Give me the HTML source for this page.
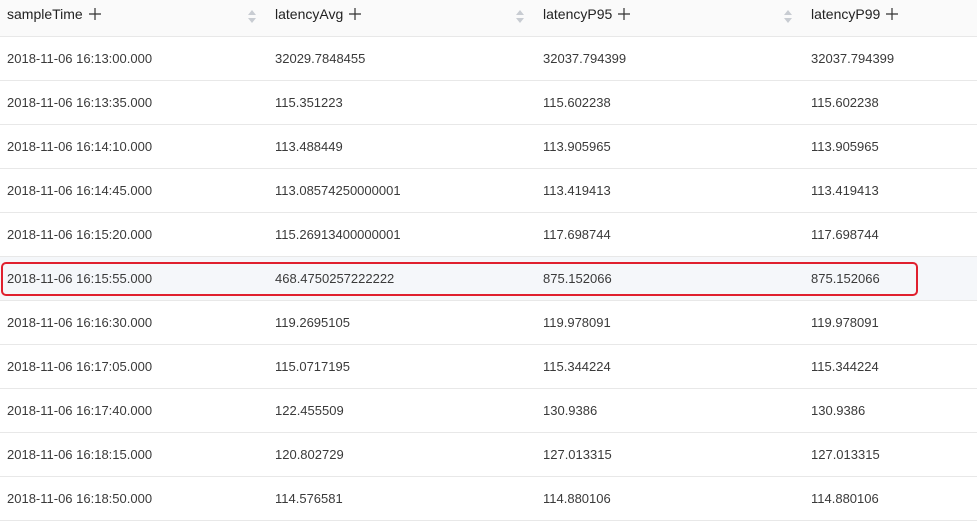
<!DOCTYPE html><html><head><style>
body{margin:0;width:977px;height:523px;overflow:hidden;background:#fff;font-family:"Liberation Sans",Arial,sans-serif;position:relative}
.r{position:absolute;left:0;width:977px;border-bottom:1px solid #e8e8e8;box-sizing:border-box}
.c{position:absolute;top:0;font-size:13px;color:#3a3a3a}
.h{height:37px;top:0;background:#fafafa}
.h .c{line-height:29px;font-size:14px;color:#222}
.d{height:44px}
.d .c{line-height:43px}
.s{position:absolute;top:7px;width:10px;height:18px}
.p{display:inline-block;width:12px;height:12px;margin-left:6px;vertical-align:-1px}
</style></head><body>
<div class="r h">
<div class="c" style="left:7px">sampleTime<svg class="p" viewBox="0 0 12 12"><path d="M6 0V12M0 6H12" stroke="#333" stroke-width="1.2"/></svg></div>
<div class="c" style="left:275px">latencyAvg<svg class="p" viewBox="0 0 12 12"><path d="M6 0V12M0 6H12" stroke="#333" stroke-width="1.2"/></svg></div>
<div class="c" style="left:543px">latencyP95<svg class="p" viewBox="0 0 12 12"><path d="M6 0V12M0 6H12" stroke="#333" stroke-width="1.2"/></svg></div>
<div class="c" style="left:811px">latencyP99<svg class="p" viewBox="0 0 12 12"><path d="M6 0V12M0 6H12" stroke="#333" stroke-width="1.2"/></svg></div>
<svg class="s" style="left:247px" viewBox="0 0 10 18"><path d="M5 3L9 8H1Z M5 16L9 11H1Z" fill="#c8ccd2"/></svg>
<svg class="s" style="left:515px" viewBox="0 0 10 18"><path d="M5 3L9 8H1Z M5 16L9 11H1Z" fill="#c8ccd2"/></svg>
<svg class="s" style="left:783px" viewBox="0 0 10 18"><path d="M5 3L9 8H1Z M5 16L9 11H1Z" fill="#c8ccd2"/></svg>
</div>
<div id="rows"></div>
<div style="position:absolute;left:1px;top:262px;width:917px;height:34px;border:2px solid #e0202e;border-radius:5px;box-sizing:border-box"></div>
<script>
var d=[["2018-11-06 16:13:00.000","32029.7848455","32037.794399"],["2018-11-06 16:13:35.000","115.351223","115.602238"],["2018-11-06 16:14:10.000","113.488449","113.905965"],["2018-11-06 16:14:45.000","113.08574250000001","113.419413"],["2018-11-06 16:15:20.000","115.26913400000001","117.698744"],["2018-11-06 16:15:55.000","468.4750257222222","875.152066"],["2018-11-06 16:16:30.000","119.2695105","119.978091"],["2018-11-06 16:17:05.000","115.0717195","115.344224"],["2018-11-06 16:17:40.000","122.455509","130.9386"],["2018-11-06 16:18:15.000","120.802729","127.013315"],["2018-11-06 16:18:50.000","114.576581","114.880106"]];
var h="";d.forEach(function(x,i){h+='<div class="r d" style="top:'+(37+i*44)+'px;'+(i==5?'background:#f5f7fa':'')+'"><div class="c" style="left:7px">'+x[0]+'</div><div class="c" style="left:275px">'+x[1]+'</div><div class="c" style="left:543px">'+x[2]+'</div><div class="c" style="left:811px">'+x[2]+'</div></div>'});
document.getElementById("rows").innerHTML=h;
</script>
</body></html>
